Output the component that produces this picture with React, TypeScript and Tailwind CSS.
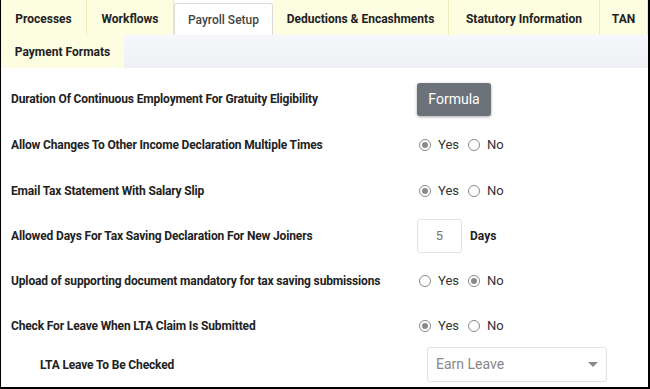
import React from 'react'

const tabsRow1 = [
  { label: 'Processes', w: 'w-[86px]' },
  { label: 'Workflows', w: 'w-[87px]' },
  { label: 'Payroll Setup', w: 'w-[99px]', active: true },
  { label: 'Deductions & Encashments', w: 'w-[176px]' },
  { label: 'Statutory Information', w: 'w-[151px]' },
  { label: 'TAN', w: 'w-[48px]' },
]

function Radio({ checked, label }: { checked: boolean; label: string }) {
  return (
    <label className="flex items-center gap-[7px]">
      <span className="w-[12px] h-[12px] rounded-full border border-[#8a8a8a] bg-white flex items-center justify-center">
        {checked && <span className="w-[6px] h-[6px] rounded-full bg-[#8a8a8a]" />}
      </span>
      <span className="text-[13px] text-[#333]">{label}</span>
    </label>
  )
}

function YesNo({ value }: { value: 'yes' | 'no' }) {
  return (
    <div className="flex items-center gap-[9px] pl-[2px]">
      <Radio checked={value === 'yes'} label="Yes" />
      <Radio checked={value === 'no'} label="No" />
    </div>
  )
}

function Row({ label, children, h = 'h-[45px]' }: { label: string; children: React.ReactNode; h?: string }) {
  return (
    <div className={`flex items-center ${h}`}>
      <div className="pl-[10px] w-[416px] text-[12px] font-bold text-[#222] tracking-[-0.15px]">{label}</div>
      <div className="flex items-center">{children}</div>
    </div>
  )
}

export default function App() {
  return (
    <div
      className="w-[650px] h-[389px] bg-white border-l border-r-2 border-b-2 border-black overflow-hidden"
      style={{ fontFamily: 'Roboto, "Liberation Sans", sans-serif' }}
    >
      {/* Tabs */}
      <div className="flex h-[35px]">
        {tabsRow1.map((t) => (
          <div
            key={t.label}
            className={`${t.w} flex items-center justify-center text-[12px] ${
              t.active
                ? 'bg-white mt-[3px] border border-b-0 border-[#dcdcdc] rounded-t-[3px] text-[#444] font-medium'
                : 'bg-[#fdfde1] border-r border-[#eeeab4] text-[#222] font-bold pt-[3px]'
            }`}
          >
            {t.label}
          </div>
        ))}
      </div>
      <div className="flex h-[33px]">
        <div className="w-[123px] flex items-center justify-center bg-[#fdfde1] text-[12px] font-bold text-[#222] pt-[1px]">
          Payment Formats
        </div>
        <div className="flex-1 bg-gradient-to-b from-[#f7f8fb] to-[#eff0f4]" />
      </div>

      {/* Settings */}
      <div className="pt-[8px]">
        <Row label="Duration Of Continuous Employment For Gratuity Eligibility" h="h-[46px]">
          <button className="w-[74px] h-[33px] rounded-[3px] bg-[#6b727a] text-white text-[14px] shadow-[0_1px_3px_rgba(0,0,0,0.35)]">
            Formula
          </button>
        </Row>
        <Row label="Allow Changes To Other Income Declaration Multiple Times" h="h-[46px]">
          <YesNo value="yes" />
        </Row>
        <Row label="Email Tax Statement With Salary Slip">
          <YesNo value="yes" />
        </Row>
        <Row label="Allowed Days For Tax Saving Declaration For New Joiners">
          <div className="w-[45px] h-[34px] border border-[#e2e2e2] rounded-[3px] flex items-center justify-center text-[13px] text-[#777]">
            5
          </div>
          <span className="ml-[8px] text-[12px] font-bold text-[#222]">Days</span>
        </Row>
        <Row label="Upload of supporting document mandatory for tax saving submissions">
          <YesNo value="no" />
        </Row>
        <Row label="Check For Leave When LTA Claim Is Submitted">
          <YesNo value="yes" />
        </Row>
        <div className="flex items-center h-[33px]">
          <div className="pl-[39px] w-[426px] text-[12px] font-bold text-[#222] tracking-[-0.15px]">
            LTA Leave To Be Checked
          </div>
          <div className="w-[180px] h-[35px] shrink-0 border border-[#e2e2e2] rounded-[3px] flex items-center justify-between pl-[8px] pr-[8px]">
            <span className="text-[14px] text-[#888]">Earn Leave</span>
            <span className="w-0 h-0 border-l-[5px] border-r-[5px] border-t-[5px] border-l-transparent border-r-transparent border-t-[#888]" />
          </div>
        </div>
      </div>
    </div>
  )
}
